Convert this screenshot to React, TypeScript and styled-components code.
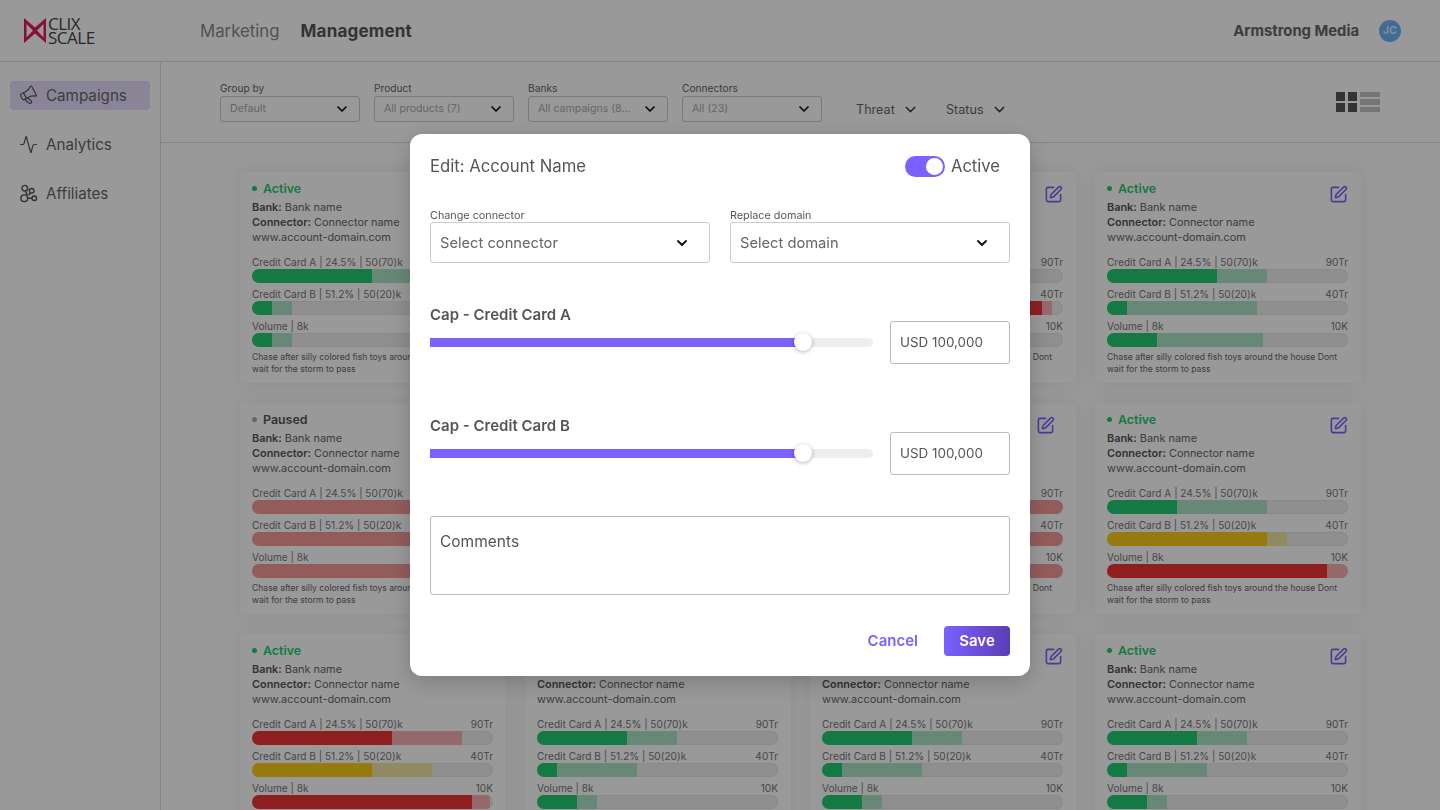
import styled, { createGlobalStyle } from "styled-components";
import { Activity, ChevronDown, Megaphone, SquarePen } from "lucide-react";

const GlobalStyle = createGlobalStyle`
  html, body { margin: 0; padding: 0; background: #fff; }
  * { box-sizing: border-box; }
  body { font-family: Inter, "Open Sans", sans-serif; color: #333; }
`;

const Page = styled.div`
  width: 1440px;
  height: 810px;
  overflow: hidden;
  display: flex;
  flex-direction: column;
  background: #fff;
`;

const TopBar = styled.header`
  height: 62px;
  flex: none;
  display: flex;
  align-items: center;
  padding: 0 39px 0 24px;
  border-bottom: 1px solid #ddd;
`;

const Logo = styled.div`
  width: 176px;
  display: flex;
  align-items: center;
`;

const LogoText = styled.div`
  font-family: "Open Sans", sans-serif;
  font-size: 17px;
  line-height: 14px;
  font-weight: 400;
  letter-spacing: -0.5px;
  color: #444;
  margin-left: 2px;
`;

const TopNav = styled.nav`
  display: flex;
  gap: 21px;
  flex: 1;
`;

const TopLink = styled.span<{ $active?: boolean }>`
  font-size: ${({ $active }) => ($active ? "17px" : "16.8px")};
  font-weight: ${({ $active }) => ($active ? 700 : 400)};
  color: ${({ $active }) => ($active ? "#555" : "#888")};
  letter-spacing: ${({ $active }) => ($active ? "0.2px" : "0")};
`;

const Account = styled.div`
  display: flex;
  align-items: center;
  gap: 20px;
  font-size: 14.8px;
  font-weight: 700;
  color: #666;
`;

const Avatar = styled.span`
  width: 22px;
  height: 22px;
  border-radius: 50%;
  background: #6db4f5;
  color: #e6f2fd;
  font-size: 10.5px;
  font-weight: 600;
  display: flex;
  align-items: center;
  justify-content: center;
`;

const Body = styled.div`
  flex: 1;
  display: flex;
  min-height: 0;
`;

const Sidebar = styled.aside`
  width: 161px;
  flex: none;
  border-right: 1px solid #ddd;
  padding: 19px 10px;
  display: flex;
  flex-direction: column;
  gap: 20px;
`;

const SideItem = styled.div<{ $active?: boolean }>`
  height: 29px;
  display: flex;
  align-items: center;
  gap: 8px;
  padding: 0 0 0 9px;
  border-radius: 4px;
  font-size: 15.2px;
  color: #666;
  background: ${({ $active }) => ($active ? "#e6defa" : "transparent")};
  svg { flex: none; color: #555; }
`;

const TiltedMegaphone = styled(Megaphone)`
  transform: rotate(-28deg);
`;

const Main = styled.main`
  flex: 1;
  min-width: 0;
`;

const FilterBar = styled.div`
  height: 81px;
  display: flex;
  align-items: flex-start;
  padding: 20px 60px 0 59px;
  border-bottom: 1px solid #ddd;
`;

const Filters = styled.div`
  display: flex;
  gap: 14px;
`;

const Filter = styled.div`
  width: 140px;
`;

const FilterLabel = styled.div`
  font-size: 10.2px;
  line-height: 12px;
  margin-bottom: 2px;
  color: #666;
`;

const FilterBox = styled.div`
  height: 26px;
  border: 1px solid #ccc;
  border-radius: 3px;
  padding: 0 9px 0 9px;
  display: flex;
  align-items: center;
  justify-content: space-between;
  font-size: 10.6px;
  color: #aaa;
  white-space: nowrap;
  svg { color: #111; flex: none; }
`;

const FilterValue = styled.span`
  margin-top: -2px;
`;

const PlainFilter = styled.div<{ $width: number }>`
  width: ${({ $width }) => $width}px;
  height: 26px;
  margin-top: 14px;
  display: flex;
  align-items: center;
  gap: 7px;
  font-size: 12.6px;
  color: #666;
  svg { color: #444; flex: none; }
`;

const Threats = styled.div`
  display: flex;
  margin-left: 34px;
  flex: 1;
`;

const ViewToggle = styled.div`
  display: flex;
  gap: 3px;
  margin-top: 10px;
`;

const GridIcon = styled.div`
  display: grid;
  grid-template-columns: 9px 9px;
  grid-auto-rows: 9px;
  gap: 2px 3px;
  span { background: #555; }
`;

const ListIcon = styled.div`
  display: grid;
  grid-template-rows: repeat(3, 5.33px);
  width: 20px;
  gap: 2px;
  span { background: #c4c4c4; }
`;

const CardGrid = styled.div`
  display: grid;
  grid-template-columns: repeat(4, 266px);
  grid-auto-rows: 211px;
  column-gap: 19px;
  row-gap: 20px;
  padding: 29px 0 0 79px;
`;

const Card = styled.article`
  border-radius: 4px;
  background: #fff;
  box-shadow: 0 0 18px rgba(0, 0, 0, 0.08);
  padding: 9px 13px 0 12px;
`;

const CardHead = styled.div`
  display: flex;
  justify-content: space-between;
  height: 19px;
`;

const Status = styled.div<{ $paused?: boolean }>`
  display: flex;
  align-items: center;
  align-self: flex-start;
  height: 15px;
  gap: 6px;
  font-size: 12.4px;
  font-weight: 600;
  color: ${({ $paused }) => ($paused ? "#555" : "#1ecb6e")};
  &::before {
    content: "";
    width: 5px;
    height: 5px;
    border-radius: 50%;
    background: ${({ $paused }) => ($paused ? "#aaa" : "#1ecb6e")};
  }
`;

const EditButton = styled.span<{ $shift?: number }>`
  color: #7b61ff;
  margin: 4px ${({ $shift }) => $shift ?? 0}px 0 0;
  height: 20px;
  svg { display: block; }
`;

const InfoLine = styled.div`
  font-size: 10.9px;
  line-height: 15px;
  color: #666;
  b { font-weight: 600; color: #555; }
`;

const Meters = styled.div`
  margin-top: 6px;
  display: flex;
  flex-direction: column;
  gap: 4px;
  padding-top: 4px;
`;

const MeterHead = styled.div`
  display: flex;
  justify-content: space-between;
  font-size: 10.1px;
  line-height: 14px;
  color: #777;
`;

const Track = styled.div`
  height: 14px;
  border-radius: 7px;
  background: #eee;
  box-shadow: inset 0 0 0 1px #e4e4e4;
  overflow: hidden;
  display: flex;
`;

const Fill = styled.div<{ $color: string; $w: number }>`
  width: ${({ $w }) => $w}px;
  background: ${({ $color }) => $color};
`;

const Note = styled.p`
  margin: 4px 0 0;
  font-size: 8.6px;
  line-height: 12px;
  color: #666;
`;

const Overlay = styled.div`
  position: fixed;
  inset: 0;
  background: rgba(0, 0, 0, 0.4);
  display: flex;
  align-items: center;
  justify-content: center;
`;

const Modal = styled.section`
  width: 620px;
  height: 542px;
  background: #fff;
  border-radius: 12px;
  box-shadow: 0 6px 24px rgba(0, 0, 0, 0.2);
  padding: 21px 20px 20px;
  display: flex;
  flex-direction: column;
`;

const ModalHead = styled.div`
  height: 22px;
  display: flex;
  align-items: center;
  justify-content: space-between;
  padding-right: 10px;
`;

const ModalTitle = styled.h2`
  margin: 0;
  font-size: 16.7px;
  font-weight: 400;
  color: #555;
`;

const ToggleWrap = styled.div`
  display: flex;
  align-items: center;
  gap: 6px;
  font-size: 16.6px;
  color: #555;
`;

const Toggle = styled.span`
  width: 40px;
  height: 21px;
  border-radius: 11px;
  background: #7b61ff;
  display: flex;
  justify-content: flex-end;
  padding: 2px;
  &::after {
    content: "";
    width: 17px;
    height: 17px;
    border-radius: 50%;
    background: #fff;
  }
`;

const SelectRow = styled.div`
  margin-top: 32px;
  display: grid;
  grid-template-columns: 1fr 1fr;
  gap: 20px;
`;

const FieldLabel = styled.label`
  display: block;
  font-size: 10.8px;
  line-height: 13px;
  color: #555;
`;

const SelectBox = styled.div`
  height: 41px;
  border: 1px solid #ccc;
  border-radius: 3px;
  display: flex;
  align-items: center;
  justify-content: space-between;
  padding: 0 19px 0 9px;
  font-size: 14.7px;
  color: #666;
  svg { color: #111; flex: none; }
`;

const CapBlock = styled.div<{ $top: number }>`
  margin-top: ${({ $top }) => $top}px;
`;

const CapLabel = styled.div`
  font-size: 15px;
  line-height: 16px;
  padding-top: 2px;
  margin-bottom: -2px;
  font-weight: 600;
  color: #555;
`;

const CapRow = styled.div`
  display: grid;
  grid-template-columns: 443px 120px;
  column-gap: 17px;
  align-items: center;
`;

const Slider = styled.div`
  position: relative;
  height: 9px;
  border-radius: 5px;
  background: #eee;
`;

const SliderFill = styled.div<{ $value: number }>`
  width: ${({ $value }) => $value}px;
  height: 100%;
  background: #7b61ff;
`;

const SliderThumb = styled.span<{ $value: number }>`
  position: absolute;
  left: ${({ $value }) => $value - 9}px;
  top: -5px;
  width: 18px;
  height: 18px;
  border-radius: 50%;
  background: #fff;
  box-shadow: 0 1px 4px rgba(0, 0, 0, 0.3);
`;

const AmountBox = styled.div`
  height: 43px;
  border: 1px solid #bbb;
  border-radius: 3px;
  display: flex;
  align-items: center;
  padding: 0 0 2px 9px;
  font-size: 13.4px;
  color: #555;
`;

const Comments = styled.div`
  margin-top: 41px;
  height: 79px;
  border: 1px solid #bbb;
  border-radius: 3px;
  padding: 16px 9px;
  font-size: 15.5px;
  line-height: 18px;
  color: #555;
`;

const Actions = styled.div`
  margin-top: 31px;
  display: flex;
  justify-content: flex-end;
  align-items: center;
  gap: 26px;
`;

const CancelButton = styled.button`
  border: 0;
  padding: 0 0 2px;
  background: none;
  font: 600 15px Inter, sans-serif;
  color: #7b61ff;
`;

const SaveButton = styled.button`
  width: 66px;
  height: 30px;
  border: 0;
  padding: 0 0 2px;
  border-radius: 4px;
  background: linear-gradient(90deg, #7b61ff, #5b3db5);
  font: 600 15px Inter, sans-serif;
  color: #fff;
`;

const GREEN = ["#1ecb6e", "#aee3c6"];
const RED = ["#ee3535", "#f7b0b5"];
const YELLOW = ["#fbcb17", "#f2e4a4"];
const FADED = ["#f59a9a", "#f59a9a"];

type Bar = [string[], number, number];
type CardData = { paused?: boolean; shift?: number; bars: Bar[] };

const defaultBars: Bar[] = [[GREEN, 110, 160], [GREEN, 20, 150], [GREEN, 50, 156]];
const pausedBars: Bar[] = [[FADED, 241, 241], [FADED, 241, 241], [FADED, 241, 241]];

const cards: CardData[] = [
  { bars: [[GREEN, 120, 170], [GREEN, 20, 40], [GREEN, 20, 40]] },
  { bars: defaultBars },
  { bars: [[GREEN, 110, 160], [RED, 220, 230], [GREEN, 50, 156]] },
  { bars: defaultBars },
  { paused: true, bars: pausedBars },
  { paused: true, bars: pausedBars },
  { paused: true, shift: 8, bars: pausedBars },
  { bars: [[GREEN, 70, 160], [YELLOW, 160, 180], [RED, 220, 241]] },
  { bars: [[RED, 140, 210], [YELLOW, 120, 180], [RED, 220, 238]] },
  { bars: [[GREEN, 90, 140], [GREEN, 20, 100], [GREEN, 40, 60]] },
  { bars: [[GREEN, 90, 140], [GREEN, 20, 100], [GREEN, 40, 60]] },
  { bars: [[GREEN, 90, 140], [GREEN, 20, 100], [GREEN, 40, 60]] },
];

const meterLabels = [
  ["Credit Card A | 24.5% | 50(70)k", "90Tr"],
  ["Credit Card B | 51.2% | 50(20)k", "40Tr"],
  ["Volume | 8k", "10K"],
];

function LogoMark() {
  return (
    <svg width="22" height="25" viewBox="0 0 22 25">
      <path
        fill="#e0185f"
        fillRule="evenodd"
        d="M0 0 11 9.5 22 0V25L11 15.5 0 25ZM2.5 6V19.5L9 12.5ZM19.5 6 13 12.5 19.5 19.5Z"
      />
    </svg>
  );
}

function AffiliatesIcon() {
  return (
    <svg width="19" height="19" viewBox="0 0 18 18" fill="none" stroke="currentColor" strokeWidth="1.4">
      <circle cx="5.5" cy="4" r="2.7" />
      <circle cx="12" cy="6.5" r="2.2" />
      <circle cx="5" cy="13.5" r="3.2" />
      <circle cx="14.5" cy="13.5" r="2.2" />
      <path d="M6 7 8 10.5M8.2 13.5H12.3M11 8.7 9 10.5" />
    </svg>
  );
}

function CampaignCard({ data }: { data: CardData }) {
  return (
    <Card>
      <CardHead>
        <Status $paused={data.paused}>{data.paused ? "Paused" : "Active"}</Status>
        <EditButton $shift={data.shift}>
          <SquarePen size={19} strokeWidth={2} />
        </EditButton>
      </CardHead>
      <InfoLine><b>Bank:</b> Bank name</InfoLine>
      <InfoLine><b>Connector:</b> Connector name</InfoLine>
      <InfoLine>www.account-domain.com</InfoLine>
      <Meters>
        {data.bars.map(([color, solid, light], i) => (
          <div key={i}>
            <MeterHead>
              <span>{meterLabels[i][0]}</span>
              <span>{meterLabels[i][1]}</span>
            </MeterHead>
            <Track>
              <Fill $color={color[0]} $w={solid} />
              <Fill $color={color[1]} $w={light - solid} />
            </Track>
          </div>
        ))}
      </Meters>
      <Note>Chase after silly colored fish toys around the house Dont wait for the storm to pass</Note>
    </Card>
  );
}

function CapField({ label, top }: { label: string; top: number }) {
  return (
    <CapBlock $top={top}>
      <CapLabel>{label}</CapLabel>
      <CapRow>
        <Slider>
          <SliderFill $value={373} />
          <SliderThumb $value={373} />
        </Slider>
        <AmountBox>USD 100,000</AmountBox>
      </CapRow>
    </CapBlock>
  );
}

export default function App() {
  const filters = [
    ["Group by", "Default"],
    ["Product", "All products (7)"],
    ["Banks", "All campaigns (8..."],
    ["Connectors", "All (23)"],
  ];

  return (
    <Page>
      <GlobalStyle />
      <TopBar>
        <Logo>
          <LogoMark />
          <LogoText>CLIX<br />SCALE</LogoText>
        </Logo>
        <TopNav>
          <TopLink>Marketing</TopLink>
          <TopLink $active>Management</TopLink>
        </TopNav>
        <Account>
          Armstrong Media
          <Avatar>JC</Avatar>
        </Account>
      </TopBar>
      <Body>
        <Sidebar>
          <SideItem $active><TiltedMegaphone size={19} strokeWidth={1.5} />Campaigns</SideItem>
          <SideItem><Activity size={19} strokeWidth={1.5} />Analytics</SideItem>
          <SideItem><AffiliatesIcon />Affiliates</SideItem>
        </Sidebar>
        <Main>
          <FilterBar>
            <Filters>
              {filters.map(([label, value]) => (
                <Filter key={label}>
                  <FilterLabel>{label}</FilterLabel>
                  <FilterBox><FilterValue>{value}</FilterValue><ChevronDown size={16} strokeWidth={2.6} /></FilterBox>
                </Filter>
              ))}
            </Filters>
            <Threats>
              <PlainFilter $width={90}>Threat<ChevronDown size={17} strokeWidth={2} /></PlainFilter>
              <PlainFilter $width={80}>Status<ChevronDown size={17} strokeWidth={2} /></PlainFilter>
            </Threats>
            <ViewToggle>
              <GridIcon><span /><span /><span /><span /></GridIcon>
              <ListIcon><span /><span /><span /></ListIcon>
            </ViewToggle>
          </FilterBar>
          <CardGrid>
            {cards.map((card, i) => <CampaignCard key={i} data={card} />)}
          </CardGrid>
        </Main>
      </Body>
      <Overlay>
        <Modal>
          <ModalHead>
            <ModalTitle>Edit: Account Name</ModalTitle>
            <ToggleWrap><Toggle />Active</ToggleWrap>
          </ModalHead>
          <SelectRow>
            <div>
              <FieldLabel>Change connector</FieldLabel>
              <SelectBox>Select connector<ChevronDown size={16} strokeWidth={2.8} /></SelectBox>
            </div>
            <div>
              <FieldLabel>Replace domain</FieldLabel>
              <SelectBox>Select domain<ChevronDown size={16} strokeWidth={2.8} /></SelectBox>
            </div>
          </SelectRow>
          <CapField label="Cap - Credit Card A" top={42} />
          <CapField label="Cap - Credit Card B" top={52} />
          <Comments>Comments</Comments>
          <Actions>
            <CancelButton>Cancel</CancelButton>
            <SaveButton>Save</SaveButton>
          </Actions>
        </Modal>
      </Overlay>
    </Page>
  );
}
